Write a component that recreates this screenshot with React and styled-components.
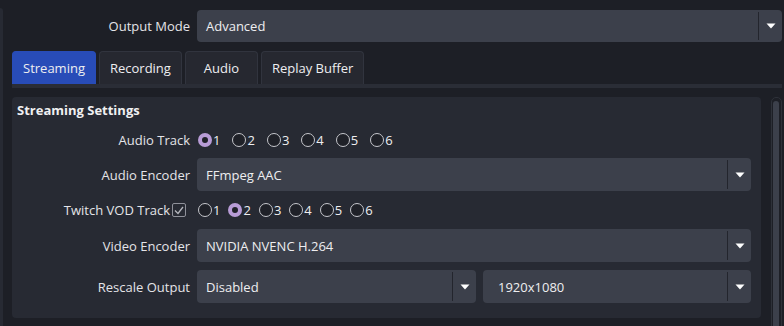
import React from 'react';
import styled, { createGlobalStyle } from 'styled-components';

const Global = createGlobalStyle`
  html, body { margin: 0; padding: 0; background: #1d1f26; overflow: hidden; height: 326px; }
  body { font-family: "Open Sans", "Noto Sans", sans-serif; font-size: 13px; color: #e4e4e8; }
  * { box-sizing: border-box; }
`;

const Page = styled.div`
  display: flex;
  height: 326px;
  overflow: hidden;
`;

const EdgeStrip = styled.div`
  width: 3px;
  flex-shrink: 0;
  margin-top: 8px;
  background: #272a33;
  border-top-right-radius: 4px;
`;

const Main = styled.div`
  flex: 1;
  min-width: 0;
  display: flex;
  flex-direction: column;
  padding: 10px 2px 0 0;
  & > * { flex-shrink: 0; }
`;

const TopForm = styled.div`
  display: grid;
  grid-template-columns: 187px 1fr;
  column-gap: 7px;
  align-items: center;
  height: 32px;
`;

const Label = styled.div`
  text-align: right;
  white-space: nowrap;
  color: #e4e4e8;
`;

const ComboBox = styled.div`
  display: flex;
  align-items: stretch;
  height: ${p => p.$h || 32}px;
  background: #3c404b;
  border-radius: 4px;
  overflow: hidden;
  min-width: 0;
`;

const ComboText = styled.div`
  flex: 1;
  display: flex;
  align-items: center;
  padding-left: ${p => p.$pad || 9}px;
  color: #eeeef0;
  white-space: nowrap;
`;

const DropButton = styled.div`
  width: 24px;
  flex-shrink: 0;
  display: flex;
  align-items: center;
  justify-content: center;
  border-left: 1px solid #23252d;
  margin: 2px 0;
`;

const Arrow = () => (
  <svg width="10" height="6" viewBox="0 0 10 6">
    <path d="M0.5 0.5 H9.5 L5 5.5 Z" fill="#ffffff" />
  </svg>
);

const Combo = ({ text, h, pad }) => (
  <ComboBox $h={h}>
    <ComboText $pad={pad}>{text}</ComboText>
    <DropButton><Arrow /></DropButton>
  </ComboBox>
);

const TabBar = styled.div`
  display: flex;
  gap: 3px;
  margin: 9px 0 0 9px;
`;

const Tab = styled.div`
  height: 33px;
  min-width: 73px;
  padding: 0 10px;
  display: flex;
  align-items: center;
  justify-content: center;
  background: ${p => (p.$active ? '#284cb8' : '#262830')};
  border: 1px solid ${p => (p.$active ? '#284cb8' : '#31343e')};
  border-bottom: none;
  border-radius: 4px 4px 0 0;
  color: #eeeef0;
  white-space: nowrap;
`;

const PaneStrip = styled.div`
  height: 4px;
  margin-left: 9px;
  background: #2a2d36;
`;

const BodyRow = styled.div`
  display: flex;
  align-items: flex-start;
  gap: 10px;
  margin: 9px 0 0 9px;
`;

const Group = styled.div`
  flex: 1;
  height: 221px;
  background: #272a33;
  border-radius: 4px;
  padding: 2px 10px 14px 5px;
`;

const GroupTitle = styled.div`
  font-weight: 700;
  height: 22px;
  line-height: 22px;
  color: #f0f0f2;
`;

const FormGrid = styled.div`
  margin-top: 9px;
  display: grid;
  grid-template-columns: 173px 1fr;
  grid-template-rows: 20px 33px 22px 33px 33px;
  column-gap: 7px;
  row-gap: 8px;
  align-items: center;
`;

const FieldCell = styled.div`
  display: flex;
  align-items: center;
  height: 100%;
  min-width: 0;
`;

const Grow = styled.div`
  flex: 1;
  min-width: 0;
`;

const SplitCell = styled.div`
  display: grid;
  grid-template-columns: 279px 1fr;
  column-gap: 7px;
  height: 100%;
`;

const RadioRow = styled.div`
  display: flex;
  align-items: center;
  gap: ${p => p.$gap}px;
  padding-left: 1px;
`;

const RadioItem = styled.div`
  display: flex;
  align-items: center;
  gap: 1px;
  color: #eeeef0;
`;

const RadioCircle = styled.span`
  width: 14px;
  height: 14px;
  border-radius: 50%;
  background: #1f2128;
  border: ${p => (p.$checked ? '4px solid #b89cd6' : '1px solid #c6c7cc')};
`;

const CheckLabel = styled.div`
  display: flex;
  align-items: center;
  justify-content: flex-end;
  gap: 2px;
  padding-right: 4px;
  white-space: nowrap;
`;

const CheckBox = styled.span`
  width: 14px;
  height: 14px;
  border: 1px solid #8f919a;
  border-radius: 2px;
  display: flex;
  align-items: center;
  justify-content: center;
`;

const Scrollbar = styled.div`
  width: 11px;
  height: 240px;
  flex-shrink: 0;
  border: 1px solid #2e3139;
  border-radius: 5px;
  background: #1d1f26;
  padding: 3px 2px 0 1px;
`;

const Thumb = styled.div`
  height: 100%;
  background: #3c404b;
  border-radius: 3px;
`;

const Radios = ({ checked, gap }) => (
  <RadioRow $gap={gap}>
    {[1, 2, 3, 4, 5, 6].map(n => (
      <RadioItem key={n}>
        <RadioCircle $checked={n === checked} />
        <span>{n}</span>
      </RadioItem>
    ))}
  </RadioRow>
);

export default function App() {
  return (
    <>
      <Global />
      <Page>
        <EdgeStrip />
        <Main>
          <TopForm>
            <Label>Output Mode</Label>
            <Combo text="Advanced" h={32} />
          </TopForm>
          <TabBar>
            <Tab $active>Streaming</Tab>
            <Tab>Recording</Tab>
            <Tab>Audio</Tab>
            <Tab>Replay Buffer</Tab>
          </TabBar>
          <PaneStrip />
          <BodyRow>
            <Group>
              <GroupTitle>Streaming Settings</GroupTitle>
              <FormGrid>
                <Label>Audio Track</Label>
                <FieldCell><Radios checked={1} gap={12} /></FieldCell>

                <Label>Audio Encoder</Label>
                <FieldCell><Grow><Combo text="FFmpeg AAC" h={33} /></Grow></FieldCell>

                <CheckLabel>
                  <span>Twitch VOD Track</span>
                  <CheckBox>
                    <svg width="10" height="9" viewBox="0 0 10 9">
                      <path d="M1 4.5 L4 7.5 L9 1" fill="none" stroke="#b4b6bd" strokeWidth="1.3" />
                    </svg>
                  </CheckBox>
                </CheckLabel>
                <FieldCell><Radios checked={2} gap={8} /></FieldCell>

                <Label>Video Encoder</Label>
                <FieldCell><Grow><Combo text="NVIDIA NVENC H.264" h={33} /></Grow></FieldCell>

                <Label>Rescale Output</Label>
                <SplitCell>
                  <Combo text="Disabled" h={33} />
                  <Combo text="1920x1080" h={33} pad={15} />
                </SplitCell>
              </FormGrid>
            </Group>
            <Scrollbar><Thumb /></Scrollbar>
          </BodyRow>
        </Main>
      </Page>
    </>
  );
}
